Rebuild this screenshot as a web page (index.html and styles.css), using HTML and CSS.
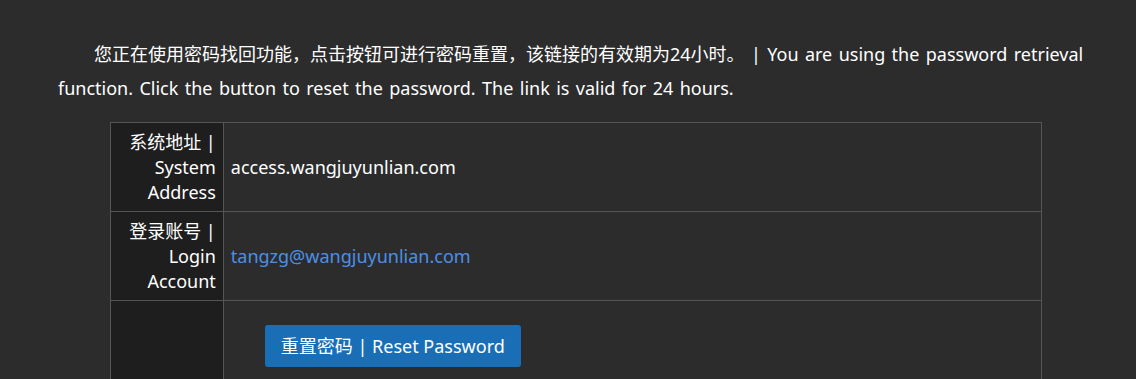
FILE: index.html
```html
<!DOCTYPE html>
<html lang="zh-CN">
<head>
    <meta charset="UTF-8">
    <meta name="viewport" content="width=device-width, initial-scale=1.0">
    <title>重置密码 | Reset Password</title>
    <link rel="stylesheet" href="styles.css">
</head>
<body>
    <div class="mail-container">
        <p class="intro">您正在使用密码找回功能，点击按钮可进行密码重置，该链接的有效期为24小时。 | You are using the password retrieval function. Click the button to reset the password. The link is valid for 24 hours.</p>
        <table class="info-table">
            <tr>
                <th>系统地址 | System Address</th>
                <td>access.wangjuyunlian.com</td>
            </tr>
            <tr>
                <th>登录账号 | Login Account</th>
                <td><a href="#" class="account-link">tangzg@wangjuyunlian.com</a></td>
            </tr>
            <tr>
                <th></th>
                <td>
                    <div class="action-wrap">
                        <a href="#" class="reset-btn">重置密码 | Reset Password</a>
                    </div>
                </td>
            </tr>
        </table>
    </div>
</body>
</html>
```

FILE: styles.css
```css
* {
    margin: 0;
    padding: 0;
    box-sizing: border-box;
}

body {
    background-color: #2c2c2c;
    color: #ffffff;
    font-family: "Noto Sans", "Noto Sans CJK SC", sans-serif;
    font-size: 18px;
}

.mail-container {
    padding: 37px 42px 0 58px;
}

.intro {
    line-height: 34px;
    text-indent: 2em;
    margin-bottom: 17px;
    word-spacing: 1.7px;
}

.info-table {
    width: 90%;
    margin: 0 auto;
    border-collapse: collapse;
}

.info-table th,
.info-table td {
    border: 1px solid #555555;
    padding: 7px 7px 6px;
    line-height: 25px;
    vertical-align: middle;
}

.info-table th {
    width: 113px;
    background-color: #1e1e1e;
    text-align: right;
    font-weight: normal;
}

.info-table td {
    background-color: #2c2c2c;
    text-align: left;
}

.account-link {
    color: #4d8fe6;
    text-decoration: none;
}

.action-wrap {
    padding: 17px 34px;
}

.reset-btn {
    display: inline-block;
    background-color: #1a6eb5;
    color: #ffffff;
    text-decoration: none;
    height: 42px;
    line-height: 42px;
    padding: 0 16px;
    border-radius: 3px;
}
```
